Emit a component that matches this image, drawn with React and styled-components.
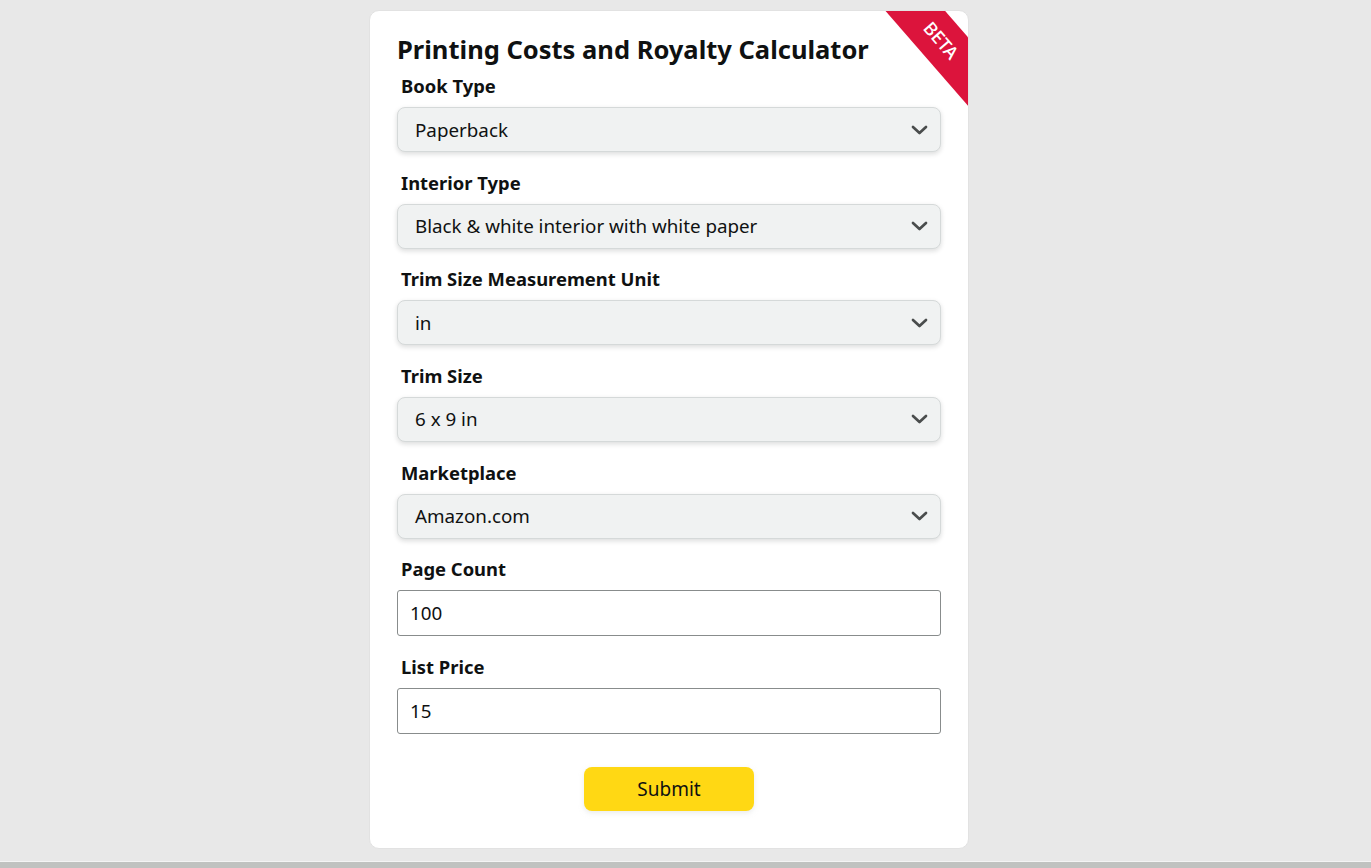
import React from "react";
import styled, { createGlobalStyle } from "styled-components";

const Global = createGlobalStyle`
  html, body { margin: 0; padding: 0; }
  body {
    background: #e8e8e8;
    font-family: "Noto Sans", "Open Sans", sans-serif;
    color: #0f1111;
    height: 868px;
    overflow: hidden;
  }
  #root { height: 868px; display: flex; flex-direction: column; }
`;

const Page = styled.div`
  flex: 1;
  display: flex;
  justify-content: center;
  align-items: flex-start;
  padding: 10px 33px 0 0;
`;

const Card = styled.form`
  position: relative;
  overflow: hidden;
  box-sizing: border-box;
  width: 600px;
  background: #fff;
  border-radius: 10px;
  border: 1px solid #e2e2e2;
  padding: 22px 27px 37px 27px;
  display: flex;
  flex-direction: column;
`;

const Ribbon = styled.div`
  position: absolute;
  top: 7px;
  left: 471px;
  width: 200px;
  height: 45px;
  line-height: 45px;
  background: #dc143c;
  color: #fff;
  text-align: center;
  font-size: 18px;
  font-weight: 500;
  transform: rotate(49deg);
`;

const Title = styled.h1`
  margin: 0 0 9px 0;
  font-size: 25.5px;
  line-height: 32px;
  font-weight: 700;
`;

const Fields = styled.div`
  display: flex;
  flex-direction: column;
  gap: 18.67px;
`;

const Field = styled.div`
  display: flex;
  flex-direction: column;
  gap: 9px;
`;

const Label = styled.label`
  padding-left: 4px;
  font-size: 18.4px;
  line-height: 24px;
  font-weight: 700;
`;

const SelectBox = styled.div`
  position: relative;
  box-sizing: border-box;
  height: 45px;
  display: flex;
  align-items: center;
  padding: 0 12px 0 17px;
  background: #f0f2f2;
  border: 1px solid #d5d9d9;
  border-radius: 8px;
  box-shadow: 0 2px 5px rgba(15, 17, 17, 0.15);
  font-size: 18.8px;
`;

const SelectText = styled.span`
  flex: 1;
`;

const Input = styled.div`
  box-sizing: border-box;
  height: 46px;
  display: flex;
  align-items: center;
  padding: 0 12px;
  border: 1px solid #888c8c;
  border-radius: 3px;
  font-size: 18.8px;
  background: #fff;
`;

const ButtonRow = styled.div`
  display: flex;
  justify-content: center;
  margin-top: 33px;
`;

const Button = styled.button`
  width: 170px;
  height: 44px;
  border: none;
  border-radius: 8px;
  background: #ffd814;
  box-shadow: 0 2px 5px rgba(213, 217, 217, 0.5);
  font-family: inherit;
  font-size: 19px;
  color: #0f1111;
`;

const Footer = styled.div`
  height: 6px;
  border-top: 1px solid #f4f4f4;
  background: #c0c2c0;
`;

const Chevron = () => (
  <svg width="17" height="10" viewBox="0 0 17 10">
    <path d="M2 2 L8.5 8 L15 2" fill="none" stroke="#4a4d4d" strokeWidth="2.7" strokeLinecap="round" strokeLinejoin="round" />
  </svg>
);

const selects = [
  ["Book Type", "Paperback"],
  ["Interior Type", "Black & white interior with white paper"],
  ["Trim Size Measurement Unit", "in"],
  ["Trim Size", "6 x 9 in"],
  ["Marketplace", "Amazon.com"],
];

const inputs = [
  ["Page Count", "100"],
  ["List Price", "15"],
];

export default function App() {
  return (
    <>
      <Global />
      <Page>
        <Card onSubmit={(e) => e.preventDefault()}>
          <Ribbon>BETA</Ribbon>
          <Title>Printing Costs and Royalty Calculator</Title>
          <Fields>
            {selects.map(([label, value]) => (
              <Field key={label}>
                <Label>{label}</Label>
                <SelectBox>
                  <SelectText>{value}</SelectText>
                  <Chevron />
                </SelectBox>
              </Field>
            ))}
            {inputs.map(([label, value]) => (
              <Field key={label}>
                <Label>{label}</Label>
                <Input>{value}</Input>
              </Field>
            ))}
          </Fields>
          <ButtonRow>
            <Button type="submit">Submit</Button>
          </ButtonRow>
        </Card>
      </Page>
      <Footer />
    </>
  );
}
